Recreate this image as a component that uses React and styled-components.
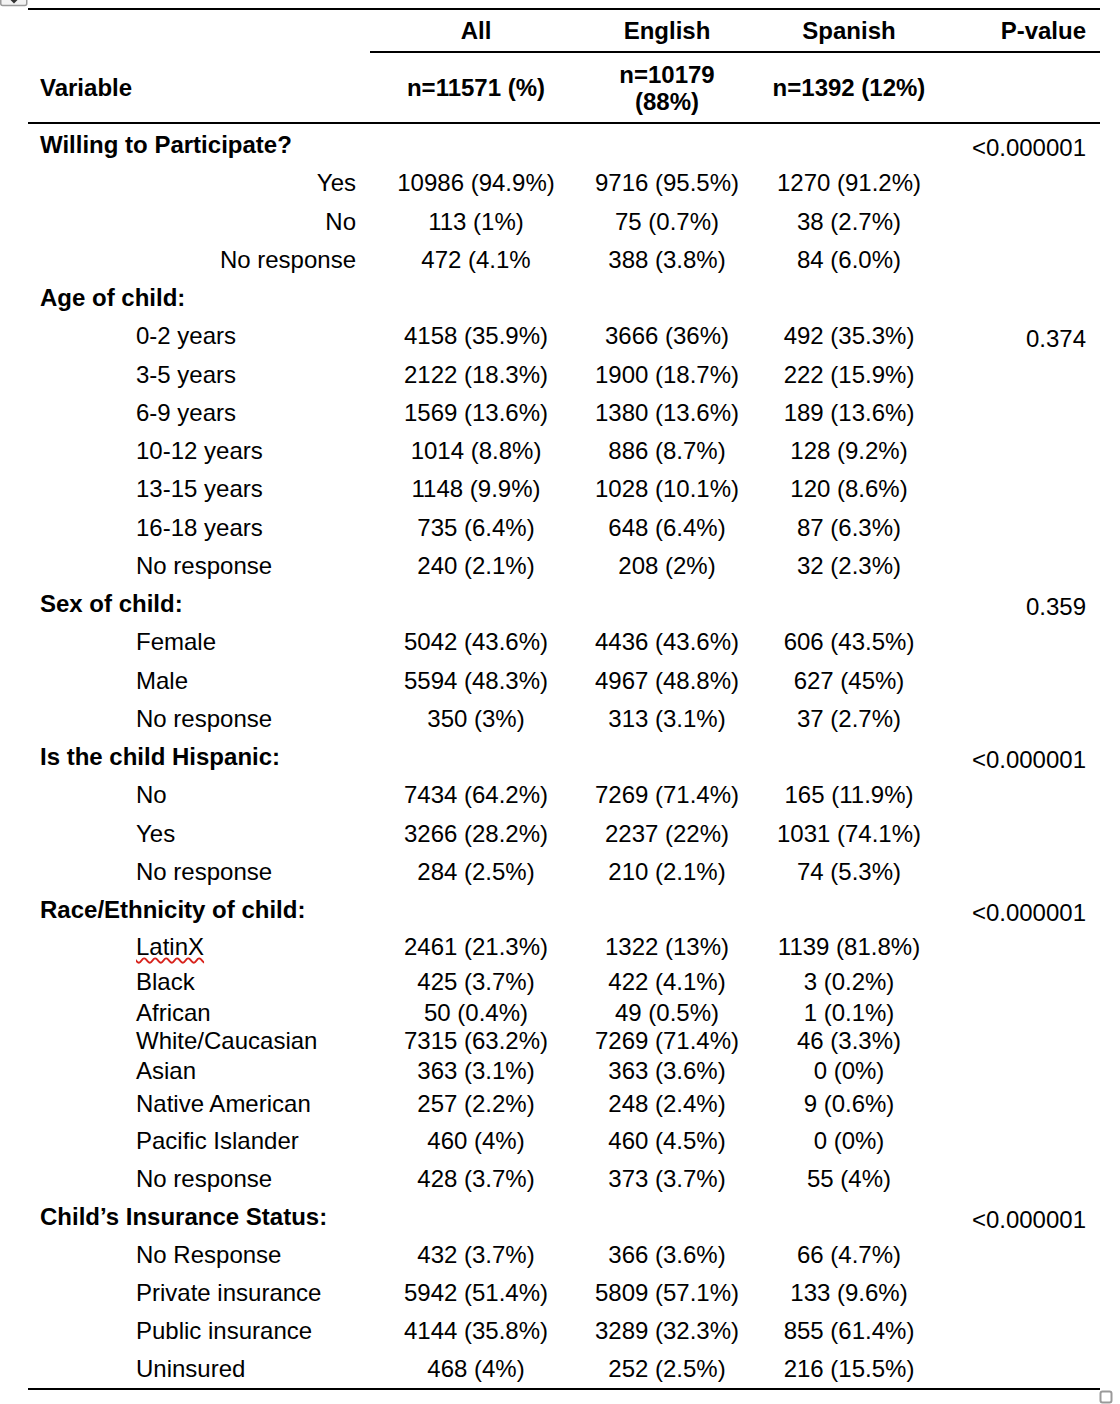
import React from "react";
import styled, { createGlobalStyle } from "styled-components";

const Global = createGlobalStyle`
  html, body { margin: 0; padding: 0; background: #ffffff; }
  body { font-family: "Liberation Sans", Arial, Helvetica, sans-serif; color: #000; }
`;

const COLS = "342px 212px 170px 194px 154px";

const Page = styled.div`
  position: relative;
  width: 1120px;
  height: 1404px;
  overflow: hidden;
`;

const Table = styled.div`
  margin: 8px 0 0 28px;
  width: 1072px;
  font-size: 24px;
`;

const HeadTop = styled.div`
  display: grid;
  grid-template-columns: ${COLS};
  border-top: 2px solid #000;
  height: 43px;
`;

const HeadBottom = styled.div`
  display: grid;
  grid-template-columns: ${COLS};
  height: 69px;
  align-items: center;
  border-bottom: 2px solid #000;
`;

const HeadCell = styled.div`
  box-sizing: border-box;
  display: flex;
  align-items: center;
  justify-content: ${(p) => (p.$right ? "flex-end" : p.$left ? "flex-start" : "center")};
  text-align: ${(p) => (p.$right ? "right" : p.$left ? "left" : "center")};
  padding: ${(p) => (p.$left ? "0 8px 0 12px" : p.$right ? "0 14px 0 8px" : "0 8px")};
  font-weight: bold;
  line-height: 27px;
  border-bottom: ${(p) => (p.$rule ? "2px solid #000" : "none")};
  height: 100%;
`;

const Body = styled.div`
  padding-top: 2px;
  border-bottom: 2px solid #000;
`;

const Row = styled.div`
  display: grid;
  grid-template-columns: ${COLS};
  align-items: center;
  height: ${(p) => p.$h}px;
  line-height: 26px;
  white-space: nowrap;
`;

const Label = styled.div`
  font-weight: ${(p) => (p.$group ? "bold" : "normal")};
  text-align: ${(p) => (p.$right ? "right" : "left")};
  padding: ${(p) =>
    p.$group ? "0 0 0 12px" : p.$right ? "0 14px 0 0" : "0 0 0 108px"};
`;

const Spell = styled.span`
  text-decoration-line: underline;
  text-decoration-style: wavy;
  text-decoration-color: #d8231c;
  text-decoration-thickness: 1.5px;
  text-underline-offset: 2px;
`;

const Value = styled.div`
  text-align: center;
`;

const PVal = styled.div`
  text-align: right;
  padding: 6px 14px 0 0;
`;

const Handle = styled.svg`
  position: absolute;
  left: 0;
  top: 0;
`;

const Resize = styled.svg`
  position: absolute;
  left: 1099px;
  top: 1390px;
`;

const sections = [
  {
    title: "Willing to Participate?",
    p: "<0.000001",
    right: true,
    rows: [
      ["Yes", "10986 (94.9%)", "9716 (95.5%)", "1270 (91.2%)"],
      ["No", "113 (1%)", "75 (0.7%)", "38 (2.7%)"],
      ["No response", "472 (4.1%", "388 (3.8%)", "84 (6.0%)"],
    ],
  },
  {
    title: "Age of child:",
    p: "0.374",
    pOnFirst: true,
    rows: [
      ["0-2 years", "4158 (35.9%)", "3666 (36%)", "492 (35.3%)"],
      ["3-5 years", "2122 (18.3%)", "1900 (18.7%)", "222 (15.9%)"],
      ["6-9 years", "1569 (13.6%)", "1380 (13.6%)", "189 (13.6%)"],
      ["10-12 years", "1014 (8.8%)", "886 (8.7%)", "128 (9.2%)"],
      ["13-15 years", "1148 (9.9%)", "1028 (10.1%)", "120 (8.6%)"],
      ["16-18 years", "735 (6.4%)", "648 (6.4%)", "87 (6.3%)"],
      ["No response", "240 (2.1%)", "208 (2%)", "32 (2.3%)"],
    ],
  },
  {
    title: "Sex of child:",
    p: "0.359",
    rows: [
      ["Female", "5042 (43.6%)", "4436 (43.6%)", "606 (43.5%)"],
      ["Male", "5594 (48.3%)", "4967 (48.8%)", "627 (45%)"],
      ["No response", "350 (3%)", "313 (3.1%)", "37 (2.7%)"],
    ],
  },
  {
    title: "Is the child Hispanic:",
    p: "<0.000001",
    rows: [
      ["No", "7434 (64.2%)", "7269 (71.4%)", "165 (11.9%)"],
      ["Yes", "3266 (28.2%)", "2237 (22%)", "1031 (74.1%)"],
      ["No response", "284 (2.5%)", "210 (2.1%)", "74 (5.3%)"],
    ],
  },
  {
    title: "Race/Ethnicity of child:",
    p: "<0.000001",
    rows: [
      ["LatinX", "2461 (21.3%)", "1322 (13%)", "1139 (81.8%)", 36, true],
      ["Black", "425 (3.7%)", "422 (4.1%)", "3 (0.2%)", 32.5],
      ["African", "50 (0.4%)", "49 (0.5%)", "1 (0.1%)", 29.5],
      ["White/Caucasian", "7315 (63.2%)", "7269 (71.4%)", "46 (3.3%)", 28],
      ["Asian", "363 (3.1%)", "363 (3.6%)", "0 (0%)", 30.5],
      ["Native American", "257 (2.2%)", "248 (2.4%)", "9 (0.6%)", 36],
      ["Pacific Islander", "460 (4%)", "460 (4.5%)", "0 (0%)", 38],
      ["No response", "428 (3.7%)", "373 (3.7%)", "55 (4%)", 38.5],
    ],
  },
  {
    title: "Child\u2019s Insurance Status:",
    p: "<0.000001",
    small: true,
    rows: [
      ["No Response", "432 (3.7%)", "366 (3.6%)", "66 (4.7%)"],
      ["Private insurance", "5942 (51.4%)", "5809 (57.1%)", "133 (9.6%)"],
      ["Public insurance", "4144 (35.8%)", "3289 (32.3%)", "855 (61.4%)"],
      ["Uninsured", "468 (4%)", "252 (2.5%)", "216 (15.5%)"],
    ],
  },
];

export default function App() {
  return (
    <Page>
      <Global />
      <Handle width="28" height="7" viewBox="0 0 28 7">
        <rect x="0.75" y="-5" width="26" height="10.5" rx="2" fill="#f3f3f3" stroke="#9a9a9a" strokeWidth="1.5" />
        <path d="M10.5 0 L17.5 0 L14 3.5 Z" fill="#333" />
      </Handle>
      <Table>
        <HeadTop>
          <HeadCell />
          <HeadCell $rule>All</HeadCell>
          <HeadCell $rule>English</HeadCell>
          <HeadCell $rule>Spanish</HeadCell>
          <HeadCell $rule $right>P-value</HeadCell>
        </HeadTop>
        <HeadBottom>
          <HeadCell $left>Variable</HeadCell>
          <HeadCell>n=11571 (%)</HeadCell>
          <HeadCell>n=10179 (88%)</HeadCell>
          <HeadCell>n=1392 (12%)</HeadCell>
          <HeadCell $right />
        </HeadBottom>
        <Body>
          {sections.map((s) => {
            const h = s.small ? 38 : 38.25;
            return (
              <React.Fragment key={s.title}>
                <Row $h={h}>
                  <Label $group>{s.title}</Label>
                  <Value />
                  <Value />
                  <Value />
                  <PVal>{s.pOnFirst ? "" : s.p}</PVal>
                </Row>
                {s.rows.map((r, i) => (
                  <Row key={s.title + i} $h={r[4] || h}>
                    <Label $right={s.right}>
                      {r[5] ? <Spell>{r[0]}</Spell> : r[0]}
                    </Label>
                    <Value>{r[1]}</Value>
                    <Value>{r[2]}</Value>
                    <Value>{r[3]}</Value>
                    <PVal>{s.pOnFirst && i === 0 ? s.p : ""}</PVal>
                  </Row>
                ))}
              </React.Fragment>
            );
          })}
        </Body>
      </Table>
      <Resize width="14" height="14" viewBox="0 0 14 14">
        <rect x="1.5" y="1.5" width="11" height="11" rx="2" fill="#fff" stroke="#9a9a9a" strokeWidth="2" />
      </Resize>
    </Page>
  );
}
